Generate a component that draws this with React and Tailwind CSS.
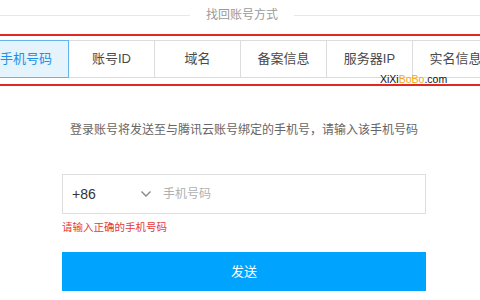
import React, { useState } from 'react'

const FONT = { fontFamily: '"Liberation Sans", "Noto Sans CJK SC", sans-serif' }

const tabs = ['手机号码', '账号ID', '域名', '备案信息', '服务器IP', '实名信息']

const App = () => {
  const [active, setActive] = useState(0)
  const [phone, setPhone] = useState('')

  return (
    <div className="relative w-[480px] h-[300px] overflow-hidden bg-white" style={FONT}>
      {/* Title */}
      <div className="flex items-center h-[30px]">
        <div className="w-[190px] h-px bg-[#e8e8e8]" />
        <span className="mx-[16px] text-[12px] text-[#9a9a9a] leading-none">找回账号方式</span>
        <div className="flex-1 h-px bg-[#e8e8e8]" />
      </div>

      {/* Tabs, boxed in red */}
      <div className="mt-[4px] border-y-2 border-[#e3261f] pt-[4px] pb-[6px]">
        <div className="flex ml-[-17px] w-[520px]">
          {tabs.map((t, i) => (
            <button
              key={t}
              onClick={() => setActive(i)}
              className={
                i === active
                  ? 'w-[86px] h-[38px] shrink-0 flex items-center justify-center text-[13px] border border-[#62b4ee] bg-[#e5f3fd] text-[#1e90e6]'
                  : 'w-[86px] h-[38px] shrink-0 flex items-center justify-center text-[13px] border-y border-r border-[#dcdcdc] text-[#4a4a4a]'
              }
            >
              {t}
            </button>
          ))}
        </div>
      </div>

      {/* Watermark */}
      <div className="absolute left-[380px] top-[74px] text-[10.5px] leading-none">
        <span className="text-[#111]">XiXi</span>
        <span className="text-[#f5a623]">BoBo</span>
        <span className="text-[#111]">.com</span>
      </div>

      {/* Form */}
      <div className="ml-[62px] w-[364px]">
        <p className="mt-[34px] text-center text-[12px] leading-[20px] text-[#666]">
          登录账号将发送至与腾讯云账号绑定的手机号，请输入该手机号码
        </p>

        <div className="mt-[34px] h-[40px] flex items-center border border-[#dedede]">
          <span className="ml-[9px] w-[68px] text-[14px] text-[#333]">+86</span>
          <svg width="12" height="8" viewBox="0 0 12 8" className="shrink-0">
            <path d="M1.5 1.5 L6 6 L10.5 1.5" fill="none" stroke="#888" strokeWidth="1.4" />
          </svg>
          <input
            value={phone}
            onChange={(e) => setPhone(e.target.value)}
            placeholder="手机号码"
            className="ml-[11px] flex-1 h-full outline-none text-[12px] text-[#333] placeholder:text-[#b0b0b0] bg-transparent"
          />
        </div>

        <p className="mt-[6px] text-[10.5px] leading-[14px] text-[#e53935]">请输入正确的手机号码</p>

        <button className="mt-[18px] w-full h-[39px] bg-[#00a4ff] text-white text-[13px]">发送</button>
      </div>
    </div>
  )
}

export default App
